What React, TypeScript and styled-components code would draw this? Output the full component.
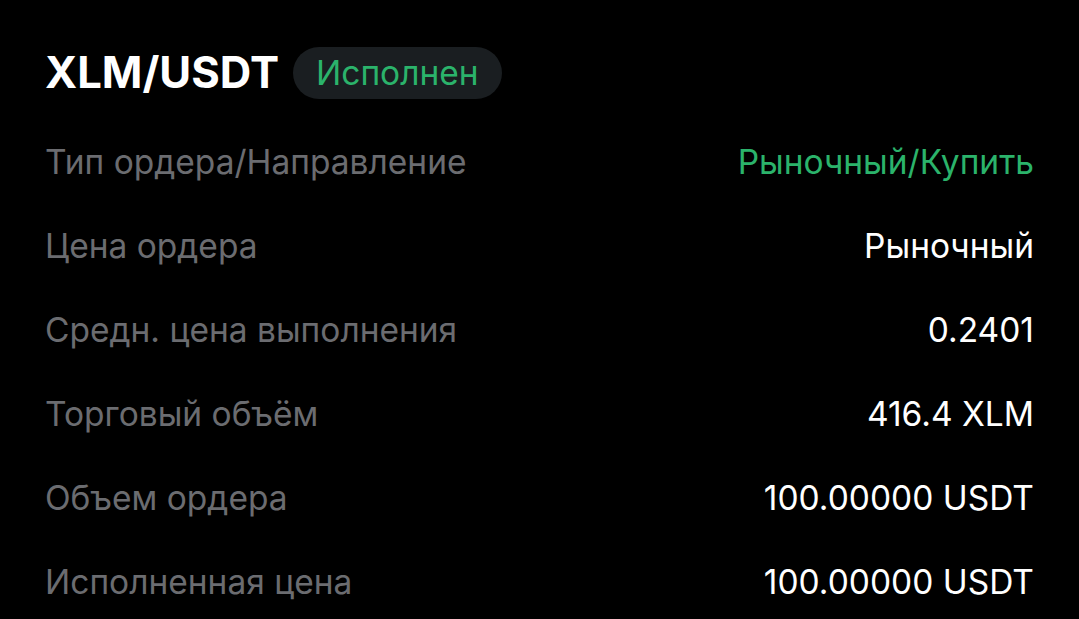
import React, { FC } from "react";
import styled, { createGlobalStyle } from "styled-components";

const GlobalStyle = createGlobalStyle`
  html, body {
    margin: 0;
    padding: 0;
    background: #000;
  }
  body {
    font-family: Inter, "Noto Sans", sans-serif;
    -webkit-font-smoothing: antialiased;
  }
`

const Page = styled.div`
  width: 1079px;
  height: 619px;
  overflow: hidden;
  background: #000;
  padding: 47px 45px 0 45px;
  box-sizing: border-box;
`

const Header = styled.div`
  display: flex;
  align-items: center;
  height: 52px;
  gap: 14px;
`

const Title = styled.h1`
  margin: 0;
  font-size: 43.6px;
  font-weight: 700;
  color: #fff;
  line-height: 1;
`

const Badge = styled.span`
  display: flex;
  align-items: center;
  height: 52px;
  padding: 0 23px;
  border-radius: 26px;
  background: #1a1e21;
  color: #2bb36b;
  font-size: 33.5px;
  font-weight: 400;
`

const List = styled.div`
  display: flex;
  flex-direction: column;
  margin-top: 21px;
`

const Row = styled.div`
  display: flex;
  align-items: center;
  justify-content: space-between;
  height: 84px;
`

const Label = styled.span`
  font-size: 33.5px;
  color: #6b6c70;
`

const Value = styled.span<{ $accent?: boolean }>`
  font-size: 33.5px;
  color: ${p => (p.$accent ? "#2bb36b" : "#fff")};
`

type Item = {
  label: string
  value: string
  accent?: boolean
}

const items: Item[] = [
  { label: "Тип ордера/Направление", value: "Рыночный/Купить", accent: true },
  { label: "Цена ордера", value: "Рыночный" },
  { label: "Средн. цена выполнения", value: "0.2401" },
  { label: "Торговый объём", value: "416.4 XLM" },
  { label: "Объем ордера", value: "100.00000 USDT" },
  { label: "Исполненная цена", value: "100.00000 USDT" },
]

const App: FC = () => {
  return (
    <Page>
      <GlobalStyle />
      <Header>
        <Title>XLM/USDT</Title>
        <Badge>Исполнен</Badge>
      </Header>
      <List>
        {items.map(item => (
          <Row key={item.label}>
            <Label>{item.label}</Label>
            <Value $accent={item.accent}>{item.value}</Value>
          </Row>
        ))}
      </List>
    </Page>
  )
}

export default App
